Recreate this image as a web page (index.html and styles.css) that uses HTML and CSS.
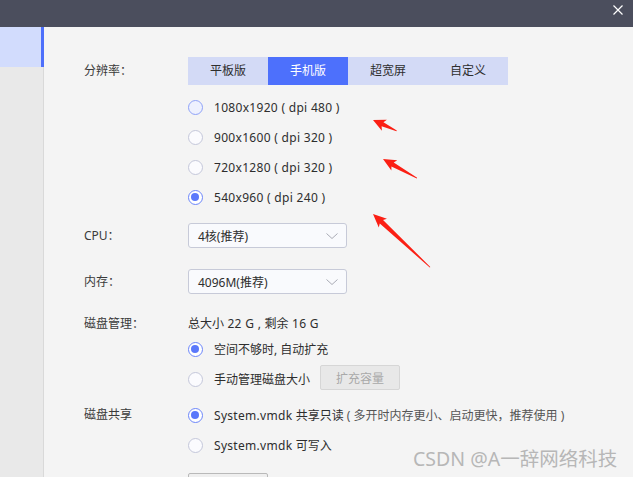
FILE: index.html
```html
<!DOCTYPE html>
<html lang="zh">
<head>
<meta charset="utf-8">
<title>设置</title>
<link rel="stylesheet" href="styles.css">
</head>
<body>
<div class="window">
  <header class="titlebar">
    <svg class="close" width="10" height="10" viewBox="0 0 10 10"><path d="M0.5 0.5 L9.5 9.5 M9.5 0.5 L0.5 9.5" stroke="#ffffff" stroke-width="1.2" fill="none"/></svg>
  </header>
  <div class="body">
    <aside class="sidebar">
      <div class="nav-item active"></div>
    </aside>
    <main class="content">
      <div class="field field-res">
        <div class="label label-tabs">分辨率：</div>
        <div class="control">
          <div class="tabs">
            <span class="tab">平板版</span>
            <span class="tab active">手机版</span>
            <span class="tab">超宽屏</span>
            <span class="tab">自定义</span>
          </div>
          <ul class="radio-list res-list">
            <li class="radio-row"><span class="radio hover"></span><span class="latin">1080x1920 ( dpi 480 )</span></li>
            <li class="radio-row"><span class="radio"></span><span class="latin">900x1600 ( dpi 320 )</span></li>
            <li class="radio-row"><span class="radio"></span><span class="latin">720x1280 ( dpi 320 )</span></li>
            <li class="radio-row"><span class="radio checked"></span><span class="latin">540x960 ( dpi 240 )</span></li>
          </ul>
        </div>
      </div>

      <div class="field field-cpu">
        <div class="label label-select">CPU：</div>
        <div class="control">
          <div class="select"><span>4核(推荐)</span><svg class="chev" width="12" height="6" viewBox="0 0 12 6"><path d="M0.5 0.5 L6 5.5 L11.5 0.5" stroke="#a9abb5" stroke-width="1" fill="none"/></svg></div>
        </div>
      </div>

      <div class="field field-mem">
        <div class="label label-select">内存：</div>
        <div class="control">
          <div class="select"><span>4096M(推荐)</span><svg class="chev" width="12" height="6" viewBox="0 0 12 6"><path d="M0.5 0.5 L6 5.5 L11.5 0.5" stroke="#a9abb5" stroke-width="1" fill="none"/></svg></div>
        </div>
      </div>

      <div class="field field-disk">
        <div class="label label-info">磁盘管理：</div>
        <div class="control">
          <div class="info">总大小<span class="latin"> 22 G , </span>剩余<span class="latin"> 16 G</span></div>
          <ul class="radio-list">
            <li class="radio-row"><span class="radio checked"></span>空间不够时, 自动扩充</li>
            <li class="radio-row"><span class="radio"></span>手动管理磁盘大小<button class="btn btn-disabled" type="button">扩充容量</button></li>
          </ul>
        </div>
      </div>

      <div class="field field-share">
        <div class="label label-radio">磁盘共享</div>
        <div class="control">
          <ul class="radio-list">
            <li class="radio-row"><span class="radio checked"></span><span class="latin">System.vmdk </span>共享只读<span class="hint">( 多开时内存更小、启动更快，推荐使用 )</span></li>
            <li class="radio-row"><span class="radio"></span><span class="latin">System.vmdk </span>可写入</li>
          </ul>
          <button class="btn btn-partial" type="button"></button>
        </div>
      </div>
    </main>
  </div>

  <svg class="annotations" width="633" height="477" viewBox="0 0 633 477">
    <g fill="#fb1f14">
      <polygon transform="translate(373 120) rotate(24.6)" points="0,0 12.5,-6 10.5,-2.2 26,-0.4 26,0.4 10.5,2.2 12.5,6"/>
      <polygon transform="translate(383 159) rotate(29.5)" points="0,0 13,-6 11,-2.3 39,-0.4 39,0.4 11,2.3 13,6"/>
      <polygon transform="translate(373 214) rotate(43)" points="0,0 13.5,-6 11.5,-2.4 78,-0.4 78,0.4 11.5,2.4 13.5,6"/>
    </g>
  </svg>
  <div class="watermark">CSDN @A一辞网络科技</div>
</div>
</body>
</html>
```

FILE: styles.css
```css
* { box-sizing: border-box; }

html, body {
  margin: 0;
  padding: 0;
}

body {
  width: 633px;
  height: 477px;
  overflow: hidden;
  font-family: "Noto Sans", "Noto Sans CJK SC", sans-serif;
  font-size: 12px;
  color: #333333;
  background: #f4f4f4;
}

.window {
  position: relative;
  width: 633px;
  height: 477px;
  display: flex;
  flex-direction: column;
  overflow: hidden;
}

.titlebar {
  height: 27px;
  flex-shrink: 0;
  background: #4b4e5d;
  display: flex;
  justify-content: flex-end;
  align-items: flex-start;
  padding: 5px 10px 0 0;
}

.close { display: block; }

.body {
  flex: 1;
  display: flex;
  min-height: 0;
}

.sidebar {
  width: 44px;
  flex-shrink: 0;
  background: #e9e9e9;
  border-right: 1px solid #d9d9d9;
}

.nav-item {
  height: 40px;
}

.nav-item.active {
  width: 44px;
  margin-right: -1px;
  background: #d2dcfd;
  border-right: 3px solid #4d6ffb;
}

.content {
  flex: 1;
  padding: 30px 0 0 40px;
  background: #f4f4f4;
  overflow: hidden;
}

.field {
  display: flex;
  align-items: flex-start;
}

.label {
  width: 104px;
  flex-shrink: 0;
  color: #3a3a3a;
}

.label-tabs { line-height: 28px; }
.label-select { line-height: 25px; }
.label-info { line-height: 20px; }
.label-radio { line-height: 30px; }

.control {
  display: flex;
  flex-direction: column;
  align-items: flex-start;
}

.tabs {
  display: flex;
  background: #d3daf6;
}

.tab {
  width: 80px;
  height: 28px;
  line-height: 28px;
  text-align: center;
  color: #2e2e2e;
}

.tab.active {
  background: #4d70fc;
  color: #ffffff;
}

.radio-list {
  list-style: none;
  margin: 0;
  padding: 0;
}

.res-list { margin-top: 7px; }

.radio-row {
  height: 30px;
  display: flex;
  align-items: center;
  color: #2e2e2e;
  white-space: pre;
}

.latin { letter-spacing: 0.3px; }

.radio {
  width: 15px;
  height: 15px;
  border-radius: 50%;
  border: 1px solid #c4c7da;
  background: #fbfbfe;
  margin-right: 11px;
  flex-shrink: 0;
  position: relative;
}

.radio.hover {
  border-color: #8fa2f8;
  background: #eef1fe;
}

.radio.checked {
  border: 1.5px solid #6c86fa;
  background: #ffffff;
}

.radio.checked::after {
  content: "";
  position: absolute;
  left: 2px;
  top: 2px;
  width: 8px;
  height: 8px;
  border-radius: 50%;
  background: #5a78fb;
}

.hint {
  font-size: 12px;
  color: #555555;
  margin-left: 3px;
}

.field-cpu { margin-top: 11px; }
.field-mem { margin-top: 21px; }
.field-disk { margin-top: 20px; }
.field-share { margin-top: 6px; }

.select {
  width: 159px;
  height: 25px;
  border: 1px solid #c7cad8;
  border-radius: 3px;
  background: #f9fafd;
  display: flex;
  align-items: center;
  justify-content: space-between;
  padding: 0 8px 0 9px;
  color: #2e2e2e;
}

.chev { display: block; }

.info {
  height: 20px;
  line-height: 20px;
  color: #2e2e2e;
  white-space: pre;
}

.btn {
  font-family: inherit;
  font-size: 12px;
  width: 80px;
  height: 25px;
  border-radius: 2px;
  padding: 0;
}

.btn-disabled {
  margin-left: 10px;
  margin-top: -3px;
  background: #e8e8e8;
  border: 1px solid #d6d6d6;
  color: #a9a9a9;
}

.btn-partial {
  margin-top: 13px;
  height: 28px;
  background: #efefef;
  border: 1px solid #b9b9b9;
}

.annotations {
  position: absolute;
  left: 0;
  top: 0;
  pointer-events: none;
}

.watermark {
  position: absolute;
  left: 413px;
  top: 447px;
  font-size: 19.5px;
  line-height: 24px;
  color: #b7b7b7;
  white-space: nowrap;
  pointer-events: none;
}
```
